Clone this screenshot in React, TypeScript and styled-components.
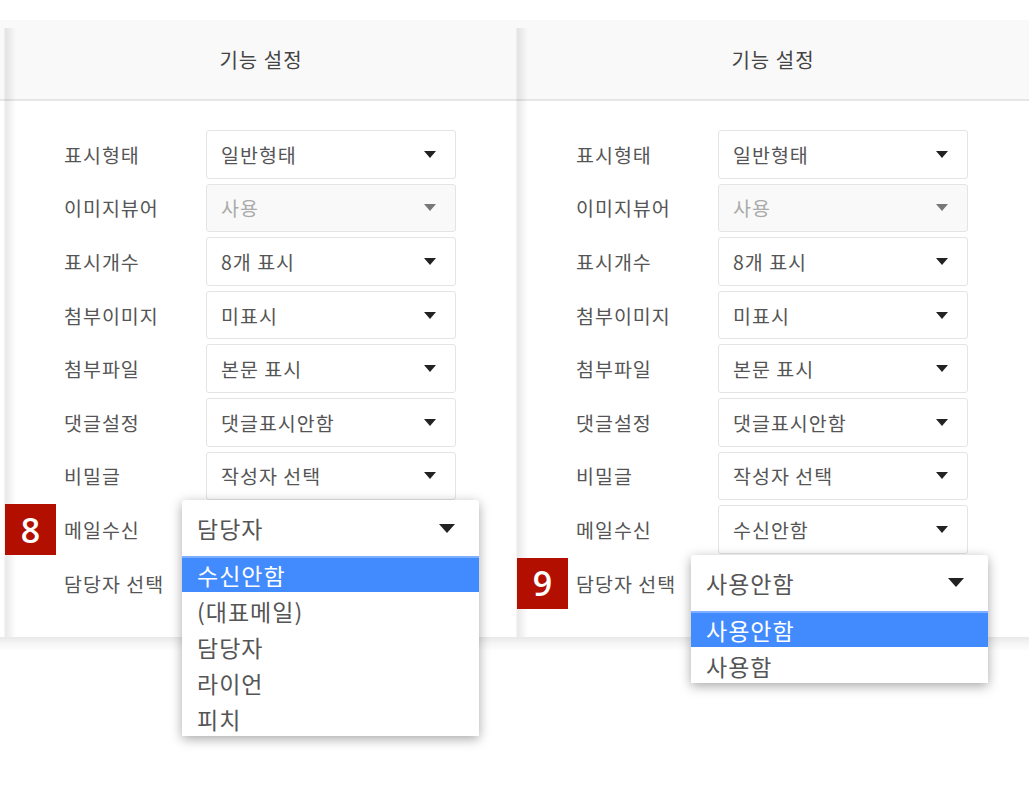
import React from "react";
import styled, { createGlobalStyle } from "styled-components";

const GlobalStyle = createGlobalStyle`
  html, body { margin: 0; padding: 0; background: #ffffff; }
  body {
    font-family: "Noto Sans CJK KR", "Noto Sans", "Liberation Sans", sans-serif;
    width: 1029px;
    height: 788px;
    overflow: hidden;
  }
  * { box-sizing: border-box; }
`;

const Board = styled.div`
  position: relative;
  margin-top: 20px;
  padding-left: 5px;
  display: flex;
  width: 1029px;
  background: linear-gradient(
    to bottom,
    #f9f9f9 0,
    #f9f9f9 79px,
    #e6e6e6 79px,
    #e6e6e6 81px,
    #ffffff 81px
  );
  &::after {
    content: "";
    position: absolute;
    left: 0;
    right: 0;
    top: 100%;
    height: 14px;
    background: linear-gradient(to bottom, #e8e8e8, #f4f4f4 40%, rgba(255, 255, 255, 0));
  }
`;

const Panel = styled.section`
  position: relative;
  width: 512px;
  display: flex;
  flex-direction: column;
  &::before {
    content: "";
    position: absolute;
    left: -1px;
    top: 8px;
    bottom: 0;
    width: 12px;
    background: linear-gradient(
      to right,
      rgba(0, 0, 0, 0.03) 0,
      rgba(0, 0, 0, 0.085) 15%,
      rgba(0, 0, 0, 0.05) 50%,
      rgba(0, 0, 0, 0) 100%
    );
    pointer-events: none;
  }
`;

const PanelHeader = styled.header`
  height: 81px;
  display: flex;
  align-items: center;
  justify-content: center;
  padding-bottom: 2px;
  font-size: 20px;
  letter-spacing: 1px;
  color: #444;
`;

const PanelBody = styled.div`
  display: grid;
  grid-template-columns: 142px 250px;
  grid-auto-rows: 48.6px;
  row-gap: 5px;
  padding: 29px 0 30px 59px;
`;

const Label = styled.div`
  position: relative;
  display: flex;
  align-items: center;
  font-size: 19.5px;
  letter-spacing: 1px;
  color: #555;
  white-space: nowrap;
`;

const Badge = styled.div`
  position: absolute;
  left: -59px;
  top: -1px;
  width: 51px;
  height: 51px;
  background: #b20f00;
  color: #fff;
  display: flex;
  align-items: center;
  justify-content: center;
  font-family: "Open Sans", "Noto Sans", sans-serif;
  font-weight: 600;
  font-size: 34px;
  letter-spacing: 0;
  line-height: 1;
`;

const Field = styled.div`
  position: relative;
`;

const SelectBox = styled.div<{ $disabled?: boolean }>`
  height: 100%;
  display: flex;
  align-items: center;
  justify-content: space-between;
  padding: 0 19px 0 14px;
  border: 1px solid #e4e4e4;
  border-radius: 3px;
  background: ${(p) => (p.$disabled ? "#f9f9f9" : "#ffffff")};
  color: ${(p) => (p.$disabled ? "#aaa" : "#555")};
  font-size: 19.5px;
  letter-spacing: 1px;
  white-space: nowrap;
`;

const Caret = styled.span<{ $size?: number; $muted?: boolean }>`
  width: 0;
  height: 0;
  border-left: ${(p) => (p.$size ?? 12) / 2}px solid transparent;
  border-right: ${(p) => (p.$size ?? 12) / 2}px solid transparent;
  border-top: ${(p) => Math.round(((p.$size ?? 12) * 7) / 12)}px solid
    ${(p) => (p.$muted ? "#777" : "#222")};
`;

const Popup = styled.div<{ $dx: number; $dy: number }>`
  position: absolute;
  z-index: 5;
  left: ${(p) => p.$dx}px;
  top: ${(p) => p.$dy}px;
  width: 297px;
  background: #fff;
  border-radius: 3px 3px 0 0;
  box-shadow: 0 3px 12px rgba(0, 0, 0, 0.35);
  color: #555;
  font-size: 23px;
  letter-spacing: 1px;
`;

const PopupHead = styled.div`
  height: 56px;
  display: flex;
  align-items: center;
  justify-content: space-between;
  padding: 0 24px 0 15px;
`;

const Option = styled.div<{ $active?: boolean }>`
  height: 36px;
  line-height: 34px;
  padding-left: 15px;
  background: ${(p) => (p.$active ? "#428bff" : "#fff")};
  color: ${(p) => (p.$active ? "#fff" : "#555")};
  border-top: 2px solid ${(p) => (p.$active ? "#7eaeff" : "transparent")};
`;

type Row = {
  label: string;
  value: string;
  disabled?: boolean;
};

type OpenSpec = {
  row: number;
  badge: string;
  value: string;
  options: string[];
  dx: number;
  dy: number;
};

const rows: Row[] = [
  { label: "표시형태", value: "일반형태" },
  { label: "이미지뷰어", value: "사용", disabled: true },
  { label: "표시개수", value: "8개 표시" },
  { label: "첨부이미지", value: "미표시" },
  { label: "첨부파일", value: "본문 표시" },
  { label: "댓글설정", value: "댓글표시안함" },
  { label: "비밀글", value: "작성자 선택" },
  { label: "메일수신", value: "수신안함" },
  { label: "담당자 선택", value: "사용안함" },
];

const SettingsPanel: React.FC<{ open: OpenSpec }> = ({ open }) => (
  <Panel>
    <PanelHeader>기능 설정</PanelHeader>
    <PanelBody>
      {rows.map((r, i) => (
        <React.Fragment key={r.label}>
          <Label>
            {open.row === i && <Badge>{open.badge}</Badge>}
            {r.label}
          </Label>
          <Field>
            <SelectBox $disabled={r.disabled}>
              <span>{r.value}</span>
              <Caret $muted={r.disabled} />
            </SelectBox>
            {open.row === i && (
              <Popup $dx={open.dx} $dy={open.dy}>
                <PopupHead>
                  <span>{open.value}</span>
                  <Caret $size={16} />
                </PopupHead>
                {open.options.map((o, k) => (
                  <Option key={o} $active={k === 0}>
                    {o}
                  </Option>
                ))}
              </Popup>
            )}
          </Field>
        </React.Fragment>
      ))}
    </PanelBody>
  </Panel>
);

export default function App() {
  return (
    <>
      <GlobalStyle />
      <Board>
        <SettingsPanel
          open={{
            row: 7,
            badge: "8",
            value: "담당자",
            options: ["수신안함", "(대표메일)", "담당자", "라이언", "피치"],
            dx: -24,
            dy: -5,
          }}
        />
        <SettingsPanel
          open={{
            row: 8,
            badge: "9",
            value: "사용안함",
            options: ["사용안함", "사용함"],
            dx: -27,
            dy: -4,
          }}
        />
      </Board>
    </>
  );
}
